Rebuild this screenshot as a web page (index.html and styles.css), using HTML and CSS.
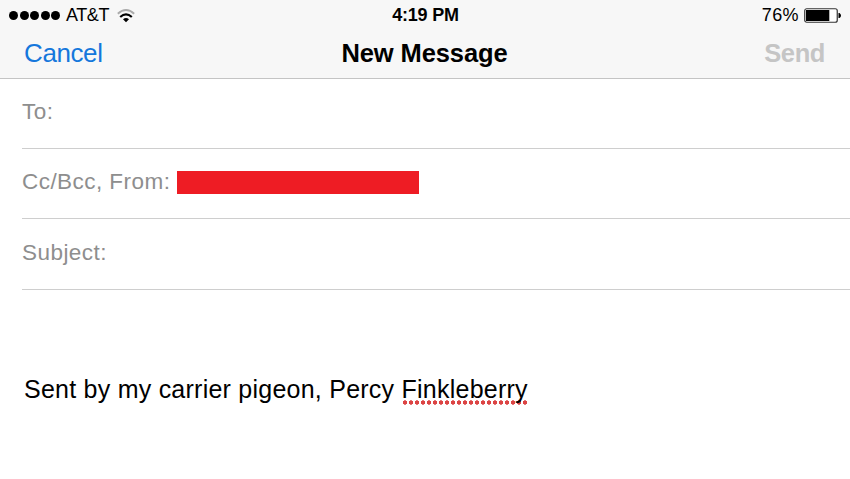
FILE: index.html
```html
<!DOCTYPE html>
<html lang="en">
<head>
    <meta charset="UTF-8">
    <meta name="viewport" content="width=device-width, initial-scale=1.0">
    <title>New Message</title>
    <link rel="stylesheet" href="styles.css">
</head>
<body>
    <header class="header">
        <div class="status-bar">
            <div class="carrier">
                <div class="signal">
                    <span></span><span></span><span></span><span></span><span></span>
                </div>
                <span class="carrier-name">AT&amp;T</span>
                <svg class="wifi" width="18" height="14" viewBox="0 0 18 14" fill="none">
                    <path d="M0.8 4.8Q9 -2.6 17.2 4.8" stroke="#aaa" stroke-width="1.9"/>
                    <path d="M3.2 8Q9 2.8 14.8 8" stroke="#000" stroke-width="2.2"/>
                    <path d="M6 10.3Q9 7.8 12 10.3L9 13.2Z" fill="#000"/>
                </svg>
            </div>
            <div class="time">4:19 PM</div>
            <div class="power">
                <span class="percent">76%</span>
                <svg width="38" height="15" viewBox="0 0 38 15">
                    <rect x="0.75" y="0.75" width="32.5" height="13.5" rx="2" fill="#fff" stroke="#333" stroke-width="1.2"/>
                    <rect x="2" y="2" width="23.3" height="11" fill="#000"/>
                    <path d="M34.5 5h1q1.5 1 1.5 2.5t-1.5 2.5h-1z" fill="#000"/>
                </svg>
            </div>
        </div>
        <div class="nav-bar">
            <a class="cancel">Cancel</a>
            <h1 class="title">New Message</h1>
            <span class="send">Send</span>
        </div>
    </header>

    <main class="compose">
        <div class="field"><span class="to">To:</span></div>
        <div class="field"><span class="from">Cc/Bcc, From:</span><span class="redacted"></span></div>
        <div class="field"><span class="subject">Subject:</span></div>
        <p class="message">Sent by my carrier pigeon, Percy <span class="misspelled">Finkleberry</span></p>
    </main>
</body>
</html>
```

FILE: styles.css
```css
* {
    box-sizing: border-box;
}
body {
    margin: 0;
    height: 479px;
    overflow: hidden;
    background-color: #fff;
    color: #000;
    font-family: "Liberation Sans", Arial, sans-serif;
}
.header {
    height: 79px;
    background-color: #f7f7f7;
    border-bottom: 1px solid #c4c4c4;
}
.status-bar {
    display: grid;
    grid-template-columns: 1fr auto 1fr;
    align-items: center;
    height: 31px;
    padding: 0 8px 0 9px;
    font-size: 18px;
}
.carrier {
    display: flex;
    align-items: center;
}
.signal {
    display: flex;
    gap: 1.5px;
    margin-right: 6px;
}
.signal span {
    width: 9px;
    height: 9px;
    border-radius: 50%;
    background-color: #000;
}
.carrier-name {
    letter-spacing: -0.4px;
}
.wifi {
    margin-left: 8px;
}
.time {
    font-weight: bold;
    letter-spacing: -0.2px;
}
.power {
    display: flex;
    align-items: center;
    justify-content: flex-end;
    gap: 5px;
}
.percent {
    letter-spacing: 0.4px;
}
.nav-bar {
    display: grid;
    grid-template-columns: 1fr auto 1fr;
    align-items: center;
    height: 44px;
    padding: 0 25px 0 24px;
    font-size: 26px;
}
.cancel {
    color: #1577dc;
    letter-spacing: -0.4px;
}
.title {
    margin: 0;
    font-size: 25.5px;
    font-weight: bold;
    letter-spacing: -0.1px;
}
.send {
    justify-self: end;
    color: #c5c5c5;
    font-size: 25.5px;
    font-weight: bold;
    letter-spacing: -0.4px;
}
.compose {
    padding-left: 22px;
}
.field {
    display: flex;
    align-items: center;
    height: 70px;
    padding-bottom: 3px;
    border-bottom: 1px solid #cecece;
    color: #8e8e8e;
    font-size: 22.5px;
    letter-spacing: 0.45px;
}
.field:nth-child(3) {
    height: 71px;
}
.redacted {
    width: 242px;
    height: 23px;
    margin-left: 7px;
    background-color: #ee1c24;
}
.message {
    margin: 84px 0 0 2px;
    font-size: 25px;
    line-height: 31px;
    letter-spacing: 0.24px;
    white-space: nowrap;
}
.misspelled {
    display: inline-block;
    background: radial-gradient(circle, #dc4444 1.9px, transparent 2.5px) 0 100% / 6px 5px repeat-x;
}
```
